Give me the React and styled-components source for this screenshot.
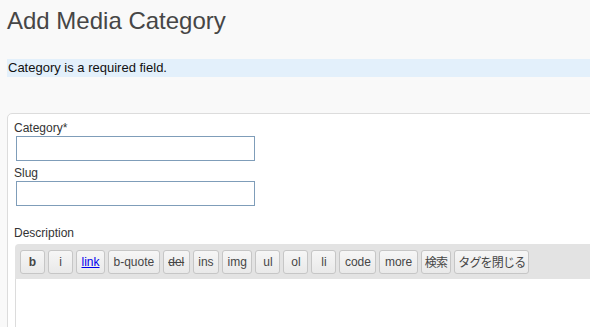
import React from 'react';
import styled, { createGlobalStyle } from 'styled-components';

const GlobalStyle = createGlobalStyle`
    body {
        margin: 0;
        background: #f9f9f9;
        font-family: "Liberation Sans", Arial, "Noto Sans CJK JP", sans-serif;
        color: #333;
        overflow: hidden;
    }
`;

const Wrap = styled.div`
    padding: 0 0 0 7px;
    width: 583px;
    height: 327px;
    overflow: hidden;
`;

const Title = styled.h2`
    margin: 0;
    padding: 6px 0 0 0;
    font-size: 24px;
    line-height: 29px;
    font-weight: normal;
    color: #464646;
`;

const Notice = styled.div`
    margin-top: 24px;
    height: 18px;
    line-height: 18px;
    background: #e3f0fb;
    font-size: 13px;
    color: #111;
    padding-left: 1px;
`;

const Panel = styled.div`
    margin-top: 36px;
    margin-right: -10px;
    background: #fff;
    border: 1px solid #dcdcdc;
    border-radius: 5px 0 0 0;
    padding: 6px 0 0 6px;
    height: 300px;
`;

const Label = styled.div`
    font-size: 12px;
    line-height: 16px;
    color: #333;
    margin-top: ${p => p.top || 0}px;
`;

const Input = styled.input`
    display: block;
    box-sizing: border-box;
    width: 239px;
    height: 25px;
    margin: 0 0 0 2px;
    border: 1px solid #7f9db9;
    background: #fff;
    padding: 2px;
`;

const Editor = styled.div`
    margin: 3px 0 0 1px;
`;

const Toolbar = styled.div`
    display: flex;
    gap: 3px;
    align-items: center;
    height: 35px;
    box-sizing: border-box;
    padding: 0 0 0 5px;
    background: #e3e3e3;
    border-radius: 4px 0 0 0;
`;

const Btn = styled.button`
    box-sizing: border-box;
    height: 24px;
    min-width: 25px;
    margin: 0;
    padding: 0 ${p => (p.cjk ? '3px' : '4.5px')};
    border: 1px solid #c6c6c6;
    border-radius: 3px;
    background: linear-gradient(#f6f6f6, #e9e9e9);
    font-family: "Liberation Sans", Arial, "Noto Sans CJK JP", sans-serif;
    font-size: 12px;
    letter-spacing: ${p => (p.cjk ? '-0.8px' : 'normal')};
    color: ${p => (p.link ? '#0000ee' : '#464646')};
    font-weight: ${p => (p.bold ? 'bold' : 'normal')};
    text-decoration: ${p => (p.link ? 'underline' : p.strike ? 'line-through' : 'none')};
    white-space: nowrap;
`;

const Area = styled.div`
    height: 60px;
    background: #fff;
    border-left: 1px solid #dcdcdc;
`;

const buttons = [
    { t: 'b', bold: true },
    { t: 'i' },
    { t: 'link', link: true },
    { t: 'b-quote' },
    { t: 'del', strike: true },
    { t: 'ins' },
    { t: 'img' },
    { t: 'ul' },
    { t: 'ol' },
    { t: 'li' },
    { t: 'code' },
    { t: 'more' },
    { t: '検索', cjk: true },
    { t: 'タグを閉じる', cjk: true },
];

const App = () => {
    return (
        <Wrap>
            <GlobalStyle />
            <Title>Add Media Category</Title>
            <Notice>Category is a required field.</Notice>
            <Panel>
                <Label>Category*</Label>
                <Input type="text" />
                <Label top={4}>Slug</Label>
                <Input type="text" />
                <Label top={19}>Description</Label>
                <Editor>
                    <Toolbar>
                        {buttons.map((b, i) => (
                            <Btn key={i} bold={b.bold} link={b.link} strike={b.strike} cjk={b.cjk}>
                                {b.t}
                            </Btn>
                        ))}
                    </Toolbar>
                    <Area />
                </Editor>
            </Panel>
        </Wrap>
    );
};

export default App;
